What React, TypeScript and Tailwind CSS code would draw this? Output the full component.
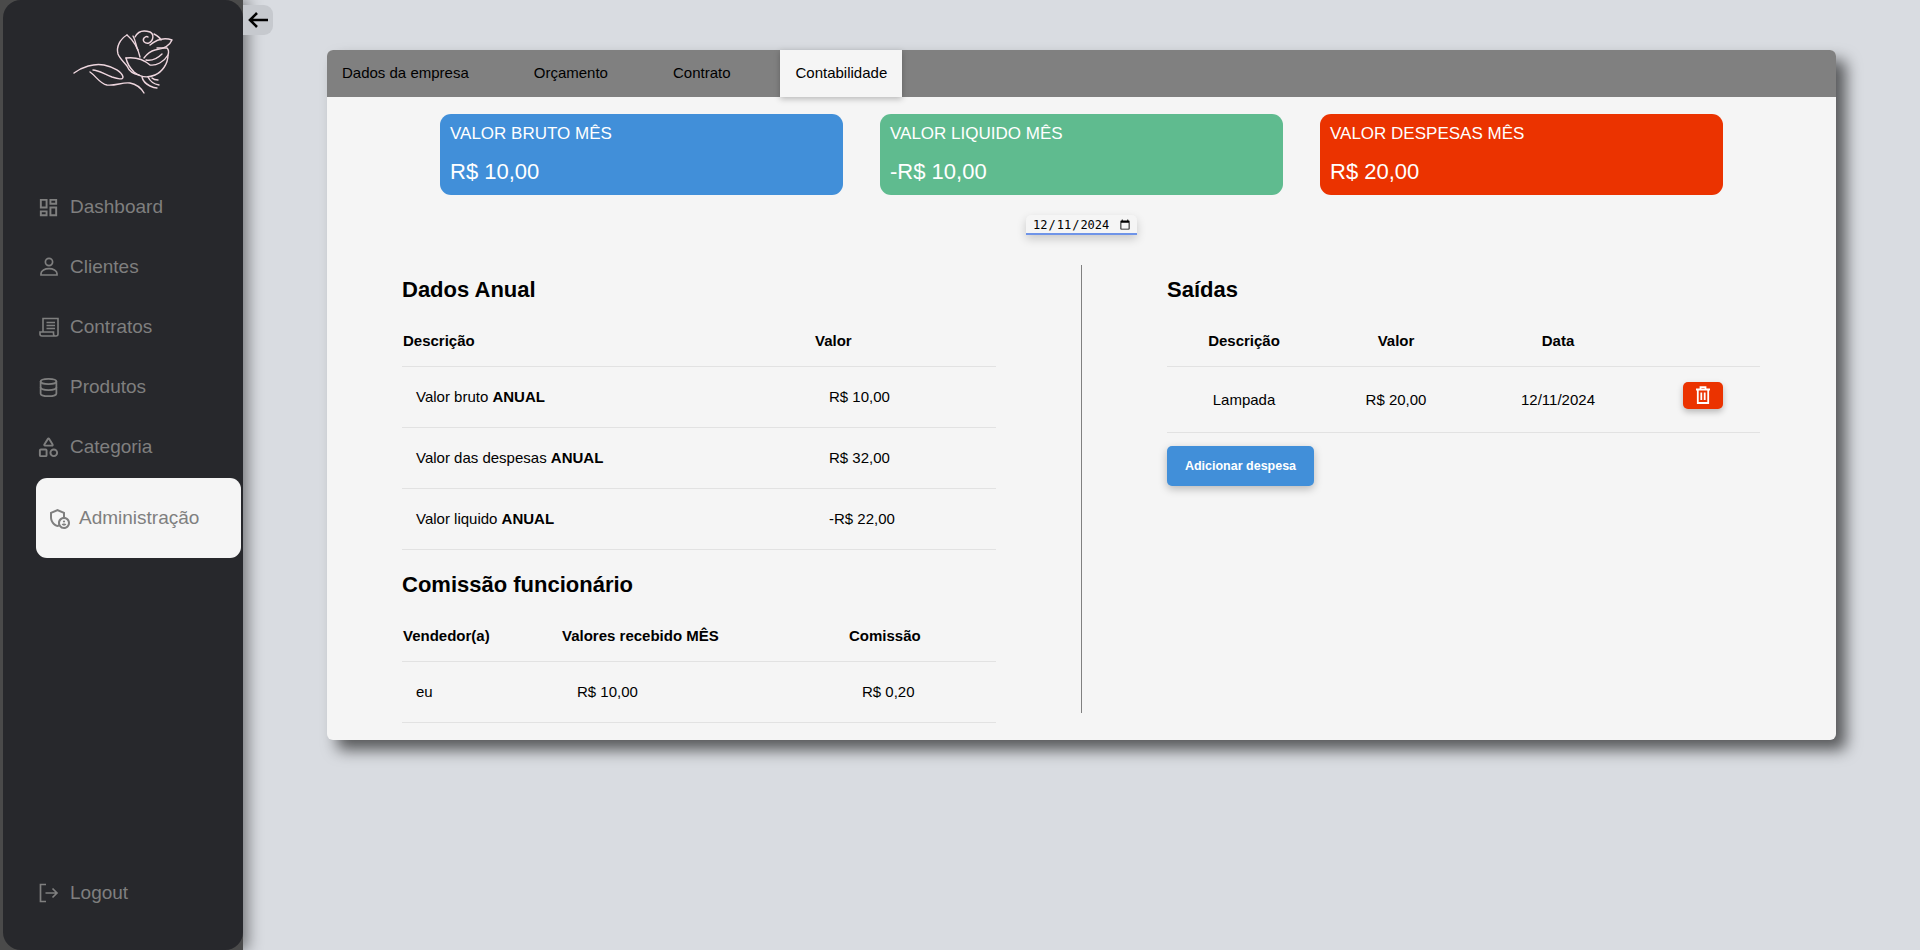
import React from "react";
import { MdOutlineDashboard, MdOutlineAdminPanelSettings } from "react-icons/md";
import { LuDatabase, LuShapes } from "react-icons/lu";

function Rose() {
  return (
    <svg width="120" height="80" viewBox="0 0 120 80" fill="none" stroke="#eed6de" strokeWidth="1.4" strokeLinecap="round" strokeLinejoin="round">
      <path d="M14 53C22 47 34 43 44 45C54 47 62 52 63 57C63 60 58 59 52 57C44 54 38 50 33 50" />
      <path d="M30 52C36 56 40 64 47 65C56 66 62 62 70 63C76 64 81 68 84 73" />
      <path d="M67 15C60 19 56 27 58 34C60 39 64 42 67 46C69 51 73 54 79 55" />
      <path d="M75 17C78 11 84 10 90 12C94 14 94 20 89 23C85 24 82 21 84 18C85 17 87 16 88 17" />
      <path d="M67 15C73 20 78 28 80 37" />
      <path d="M73 16C76 21 76 27 78 30" />
      <path d="M90 25C96 20 104 17 112 20C110 25 104 29 95 30C90 31 87 34 84 38" />
      <path d="M94 14C98 16 100 18 101 20" />
      <path d="M66 38C74 37 82 38 90 45C96 46 104 42 108 35C109 32 108 29 107 28C104 28 99 28 97 28" />
      <path d="M86 40C92 41 97 39 102 34" />
      <path d="M108 35C108 44 102 52 95 55C88 58 80 57 74 52C70 48 67 43 66 38" />
      <path d="M82 57C83 62 86 64 90 66C92 67 94 68 97 68" />
      <path d="M88 57C90 61 93 64 99 65" />
      <path d="M92 58C94 60 96 60 98 60" />
    </svg>
  );
}

function LogoutIcon() {
  return (
    <svg width="20" height="20" viewBox="0 0 20 20" fill="none" stroke="#7f7f7f" strokeWidth="1.7">
      <path d="M7 1.5H1.5V18.5H7" />
      <path d="M6.5 10H18M13.5 5.5L18 10L13.5 14.5" />
    </svg>
  );
}

function PersonIcon() {
  return (
    <svg width="20" height="20" viewBox="0 0 20 20" fill="none" stroke="#7f7f7f" strokeWidth="1.7">
      <circle cx="10" cy="5" r="3.6" />
      <path d="M2 18V16.5C2 13.5 6 11.7 10 11.7C14 11.7 18 13.5 18 16.5V18Z" />
    </svg>
  );
}

function ScrollIcon() {
  return (
    <svg width="20" height="20" viewBox="0 0 20 20" fill="none" stroke="#7f7f7f" strokeWidth="1.6">
      <path d="M4 15V1.5H19V17A2 2 0 0 1 17 19H3A2 2 0 0 1 1 17V15H14.5V17A2 2 0 0 0 17 19" />
      <path d="M7.5 5.5H16M7.5 8.5H16M7.5 11.5H16" />
    </svg>
  );
}

function TrashIcon() {
  return (
    <svg width="18" height="18" viewBox="0 0 18 18" fill="none" stroke="#fff" strokeWidth="1.8">
      <path d="M2 3.5H16M6.5 3.5V1.2H11.5V3.5" />
      <path d="M3.8 3.5V17H14.2V3.5" />
      <path d="M7.3 6.5V14M10.7 6.5V14" />
    </svg>
  );
}

function NavItem({ icon, label }: { icon: React.ReactNode; label: string }) {
  return (
    <div className="flex h-[60px] items-center gap-[10px] pl-[34px] text-[19px] text-[#7f7f7f]">
      <span className="flex w-[23px] justify-center text-[#7f7f7f]">{icon}</span>
      <span className="pt-[1px]">{label}</span>
    </div>
  );
}

function StatCard({ title, value, color }: { title: string; value: string; color: string }) {
  return (
    <div className={`flex h-[81px] w-[403px] flex-col rounded-[11px] pl-[10px] pt-[10px] text-white ${color}`}>
      <div className="text-[17px] leading-[20px]">{title}</div>
      <div className="mt-[15px] text-[22px] leading-[25px]">{value}</div>
    </div>
  );
}

function Heading({ children }: { children: React.ReactNode }) {
  return <h2 className="text-[22px] font-bold leading-[25px] text-black">{children}</h2>;
}

export default function App() {
  const sans = "font-['Liberation_Sans',Arial,sans-serif]";
  return (
    <div className={`flex h-[950px] w-[1920px] overflow-hidden bg-[#d9dce1] ${sans}`}>
      <div className="relative z-10 h-full w-[243px] shrink-0 bg-[#4a4a4a] pl-[3px] shadow-[5px_0_14px_rgba(0,0,0,0.45)]">
        <aside className="flex h-full flex-col rounded-[18px] bg-[#27282c]">
          <div className="h-[177px] pl-[57px] pt-[20px]">
            <Rose />
          </div>
          <nav className="flex flex-col">
            <NavItem icon={<MdOutlineDashboard size={25} />} label="Dashboard" />
            <NavItem icon={<PersonIcon />} label="Clientes" />
            <NavItem icon={<ScrollIcon />} label="Contratos" />
            <NavItem icon={<LuDatabase size={21} />} label="Produtos" />
            <NavItem icon={<LuShapes size={23} />} label="Categoria" />
            <div className="ml-[33px] mt-[1px] flex h-[80px] w-[205px] items-center gap-[8px] rounded-[11px] bg-[#f5f5f5] pl-[11px] text-[19px] text-[#7f7f7f]">
              <MdOutlineAdminPanelSettings size={24} />
              <span>Administração</span>
            </div>
          </nav>
          <div className="mt-auto pb-[27px]">
            <NavItem icon={<LogoutIcon />} label="Logout" />
          </div>
        </aside>
        <button className="absolute left-[243px] top-[5px] flex h-[30px] w-[30px] items-center justify-center rounded-r-[9px] bg-[#c6c9ce]">
          <svg width="22" height="18" viewBox="0 0 22 18" fill="none" stroke="#000" strokeWidth="2.6">
            <path d="M21 9H3M10 2L3 9L10 16" />
          </svg>
        </button>
      </div>

      <main className="min-w-0 flex-1 pl-[84px] pr-[84px] pt-[50px]">
        <section className="flex h-[690px] flex-col rounded-[6px] bg-[#f5f5f5] text-black shadow-[10px_10px_15px_rgba(0,0,0,0.6)]">
          <div className="flex h-[47px] shrink-0 gap-[35px] rounded-t-[6px] bg-[#808080] text-[15px]">
            <div className="flex items-center px-[15px]">Dados da empresa</div>
            <div className="flex items-center px-[15px]">Orçamento</div>
            <div className="flex items-center px-[15px]">Contrato</div>
            <div className="-ml-[1px] flex items-center bg-[#f5f5f5] pl-[16px] pr-[15px] shadow-[0_2px_6px_rgba(0,0,0,0.25)]">Contabilidade</div>
          </div>

          <div className="mt-[17px] flex justify-center gap-[37px]">
            <StatCard title="VALOR BRUTO MÊS" value="R$ 10,00" color="bg-[#418fd9]" />
            <StatCard title="VALOR LIQUIDO MÊS" value="-R$ 10,00" color="bg-[#5fbb8f]" />
            <StatCard title="VALOR DESPESAS MÊS" value="R$ 20,00" color="bg-[#eb3300]" />
          </div>

          <div className="mt-[20px] flex justify-center">
            <input
              type="date"
              defaultValue="2024-12-11"
              className="h-[20px] w-[111px] rounded-t-[5px] border-b-2 border-[#6f94e8] bg-[#f5f5f5] pl-[6px] pr-[4px] pt-[2px] font-['DejaVu_Sans_Mono',monospace] text-[12px] shadow-[0_4px_10px_rgba(0,0,0,0.18)] outline-none"
            />
          </div>

          <div className="mt-[30px] flex">
            <div className="w-[754px] shrink-0 pl-[75px] pt-[12px]">
              <div className="w-[594px]">
                <Heading>Dados Anual</Heading>
                <div className="mt-[16px] grid h-[49px] grid-cols-[412px_1fr] items-center border-b border-[#e2e2e2] pb-[2px] pl-[1px] text-[15px] font-bold">
                  <div>Descrição</div>
                  <div>Valor</div>
                </div>
                {[
                  ["Valor bruto ", "R$ 10,00"],
                  ["Valor das despesas ", "R$ 32,00"],
                  ["Valor liquido ", "-R$ 22,00"],
                ].map(([label, value]) => (
                  <div key={label} className="grid h-[61px] grid-cols-[413px_1fr] items-center border-b border-[#e2e2e2] pl-[14px] text-[15px]">
                    <div>
                      {label}
                      <b>ANUAL</b>
                    </div>
                    <div>{value}</div>
                  </div>
                ))}
                <div className="mt-[22px]">
                  <Heading>Comissão funcionário</Heading>
                </div>
                <div className="mt-[15px] grid h-[50px] grid-cols-[159px_287px_1fr] items-center border-b border-[#e2e2e2] pl-[1px] text-[15px] font-bold">
                  <div>Vendedor(a)</div>
                  <div>Valores recebido MÊS</div>
                  <div>Comissão</div>
                </div>
                <div className="grid h-[61px] grid-cols-[161px_285px_1fr] items-center border-b border-[#e2e2e2] pl-[14px] text-[15px]">
                  <div>eu</div>
                  <div>R$ 10,00</div>
                  <div>R$ 0,20</div>
                </div>
              </div>
            </div>

            <div className="h-[448px] w-[1px] shrink-0 bg-[#808080]" />

            <div className="pl-[85px] pt-[12px]">
              <div className="w-[593px]">
                <Heading>Saídas</Heading>
                <div className="mt-[16px] grid h-[49px] grid-cols-[154px_150px_174px_115px] items-center border-b border-[#e2e2e2] pb-[2px] text-center text-[15px] font-bold">
                  <div>Descrição</div>
                  <div>Valor</div>
                  <div>Data</div>
                  <div />
                </div>
                <div className="grid h-[66px] grid-cols-[154px_150px_174px_115px] items-center border-b border-[#e2e2e2] text-center text-[15px]">
                  <div className="pt-[1px]">Lampada</div>
                  <div className="pt-[1px]">R$ 20,00</div>
                  <div className="pt-[1px]">12/11/2024</div>
                  <div className="flex justify-center pb-[9px]">
                    <button className="flex h-[27px] w-[40px] items-center justify-center rounded-[5px] bg-[#eb3300] text-white shadow-[0_3px_6px_rgba(0,0,0,0.25)]">
                      <TrashIcon />
                    </button>
                  </div>
                </div>
                <button className="mt-[13px] h-[40px] w-[147px] rounded-[5px] bg-[#418fd9] text-[12.5px] font-bold text-white shadow-[0_3px_8px_rgba(0,0,0,0.25)]">
                  Adicionar despesa
                </button>
              </div>
            </div>
          </div>
        </section>
      </main>
    </div>
  );
}
